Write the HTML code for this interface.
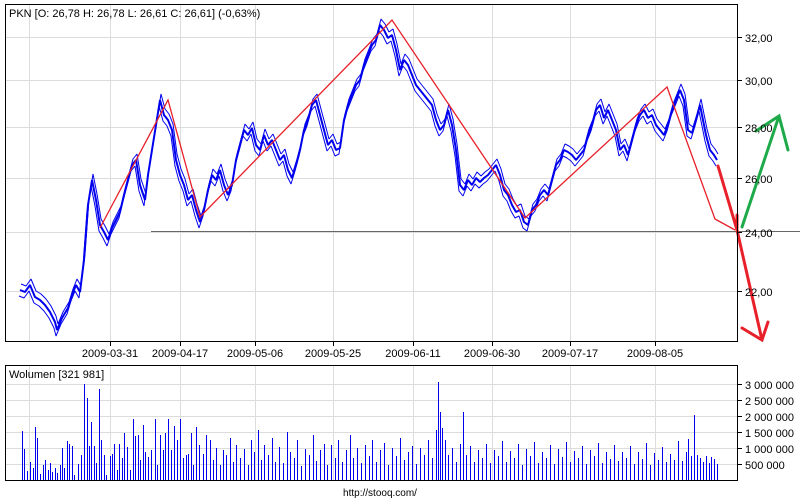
<!DOCTYPE html>
<html><head><meta charset="utf-8"><style>
html,body{margin:0;padding:0;background:#fff;width:800px;height:500px;overflow:hidden}
svg{display:block;font-family:"Liberation Sans",Arial,sans-serif}
</style></head><body>
<svg width="800" height="500" viewBox="0 0 800 500">
<defs>
<polyline id="pl" points="20,290 25,292 30,285 35,297 40,300 45,305 50,312 55,322 57,330 62,318 68,308 72,295 76,285 80,292 84,260 88,205 92,180 96,200 100,225 104,232 108,240 112,228 116,220 120,212 124,195 128,180 132,165 136,160 140,185 145,200 148,175 152,150 156,125 160,100 164,115 168,120 172,130 176,160 180,175 184,185 188,200 192,195 196,210 200,222 204,210 208,190 212,175 216,180 220,170 224,185 228,195 232,185 236,160 240,145 244,130 248,135 252,128 256,145 260,150 264,135 268,145 272,140 276,150 280,160 284,155 288,170 292,178 296,165 300,150 304,130 308,120 312,105 316,100 320,115 324,130 328,145 332,140 336,150 340,148 344,120 348,105 352,95 356,85 360,80 364,65 368,55 372,45 376,40 380,25 384,30 388,38 392,35 396,50 400,70 404,60 408,65 412,75 416,85 420,90 424,95 428,100 432,105 436,120 440,130 444,125 448,110 452,125 456,150 460,185 464,190 468,180 472,185 476,178 480,182 484,178 488,175 492,170 496,165 500,175 504,190 508,195 512,205 516,212 520,210 524,222 528,225 532,210 536,205 540,195 544,190 548,195 552,180 556,165 560,160 564,150 568,152 572,155 576,160 580,155 584,150 588,135 592,125 596,110 600,105 604,118 608,110 612,120 616,130 620,150 624,145 628,155 632,140 636,125 640,115 644,110 648,118 652,115 656,125 660,130 664,135 668,125 672,110 676,100 680,90 684,100 688,130 692,133 696,120 700,105 702,115 706,135 710,150 714,155 717,160"/>
</defs>
<g stroke="#dcdcdc" stroke-width="1" fill="none">
<path d="M29.5 5V342M110.5 5V342M180.5 5V342M255.5 5V342M333.5 5V342M413.5 5V342M492.5 5V342M570.5 5V342M655.5 5V342"/>
<path d="M5 37.5H738M5 80.5H738M5 127.5H738M5 178.5H738M5 232.5H738M5 291.5H738"/>
<path d="M29.5 366V480M110.5 366V480M180.5 366V480M255.5 366V480M333.5 366V480M413.5 366V480M492.5 366V480M570.5 366V480M655.5 366V480"/>
<path d="M5 384.5H738M5 400.5H738M5 416.5H738M5 432.5H738M5 448.5H738M5 464.5H738"/>
</g>
<path d="M151 231.5H800" stroke="#666" stroke-width="1"/>
<g stroke="#0000ee" fill="none" stroke-linejoin="bevel">
<use href="#pl" stroke-width="2"/>
<use href="#pl" stroke-width="1" transform="translate(1,-6)"/>
<use href="#pl" stroke-width="1" transform="translate(-1,6)"/>
</g>
<g stroke="#e8202a" fill="none" stroke-width="1.3">
<polyline points="100,228 168,100 200,217 392,20 525,218 667,87 715,219 735,230"/>
</g>
<g stroke="#e8202a" fill="none" stroke-width="3" stroke-linecap="round">
<path d="M718 166L737 230L762 340M742 328L762 340L768 322M737 215V228"/>
</g>
<g stroke="#1faa4a" fill="none" stroke-width="3" stroke-linecap="round">
<path d="M742 227L779 116M756 131L779 116L788 150"/>
</g>
<rect x="5.5" y="4.5" width="732" height="337" fill="none" stroke="#000"/>
<rect x="5.5" y="365.5" width="732" height="115" fill="none" stroke="#000"/>
<g stroke="#000"><path d="M110.5 342V346M180.5 342V346M255.5 342V346M333.5 342V346M413.5 342V346M492.5 342V346M570.5 342V346M655.5 342V346"/>
<path d="M738 37.5H742M738 80.5H742M738 127.5H742M738 178.5H742M738 232.5H742M738 291.5H742M738 384.5H742M738 400.5H742M738 416.5H742M738 432.5H742M738 448.5H742M738 464.5H742"/></g>
<g font-size="11" fill="#000">
<text x="9" y="17">PKN [O: 26,78  H: 26,78  L: 26,61  C: 26,61] (-0,63%)</text>
<text x="9" y="378">Wolumen [321 981]</text>
<g text-anchor="middle">
<text x="110" y="357">2009-03-31</text><text x="180" y="357">2009-04-17</text><text x="255" y="357">2009-05-06</text><text x="333" y="357">2009-05-25</text><text x="413" y="357">2009-06-11</text><text x="492" y="357">2009-06-30</text><text x="570" y="357">2009-07-17</text><text x="655" y="357">2009-08-05</text>
</g>
<text x="745" y="42">32,00</text><text x="745" y="85">30,00</text><text x="745" y="132">28,00</text><text x="745" y="183">26,00</text><text x="745" y="237">24,00</text><text x="745" y="296">22,00</text>
<text x="745" y="389">3 000 000</text><text x="745" y="405">2 500 000</text><text x="745" y="421">2 000 000</text><text x="745" y="437">1 500 000</text><text x="745" y="453">1 000 000</text><text x="745" y="469">500 000</text>
<text x="380" y="496" font-size="10" text-anchor="middle">http://stooq.com/</text>
</g>
<path transform="translate(0.5,0)" stroke="#0000ee" stroke-width="1" fill="none" d="M22 480V431M24 480V449M27 480V471M30 480V462M33 480V468M35 480V427M37 480V438M40 480V474M43 480V465M45 480V460M48 480V470M50 480V463M52 480V472M55 480V468M57 480V473M60 480V465M62 480V448M64 480V468M67 480V441M69 480V444M72 480V446M74 480V475M78 480V464M81 480V455M84 480V384M87 480V398M89 480V446M91 480V422M94 480V446M96 480V463M99 480V389M101 480V440M104 480V455M106 480V475M110 480V456M112 480V454M114 480V444M117 480V470M119 480V444M122 480V458M124 480V433M127 480V447M130 480V470M133 480V419M135 480V436M138 480V435M140 480V460M143 480V425M145 480V452M148 480V457M151 480V450M155 480V419M157 480V465M160 480V435M163 480V450M165 480V433M168 480V419M171 480V450M174 480V426M177 480V440M180 480V419M183 480V458M186 480V455M188 480V454M191 480V433M193 480V465M196 480V427M199 480V445M203 480V454M206 480V435M210 480V440M213 480V460M216 480V448M220 480V465M223 480V450M226 480V455M230 480V438M233 480V462M236 480V445M240 480V458M244 480V449M248 480V465M251 480V440M254 480V452M258 480V430M261 480V460M264 480V445M268 480V455M272 480V438M275 480V462M279 480V447M283 480V463M287 480V432M290 480V452M294 480V458M297 480V440M301 480V466M305 480V449M309 480V455M313 480V435M316 480V461M320 480V450M324 480V444M327 480V465M331 480V445M335 480V458M338 480V440M342 480V462M346 480V450M350 480V435M353 480V458M357 480V448M361 480V463M365 480V445M369 480V456M372 480V440M376 480V462M380 480V450M384 480V443M388 480V465M392 480V448M396 480V456M400 480V438M404 480V460M408 480V452M412 480V446M416 480V464M420 480V448M424 480V455M428 480V440M432 480V458M436 480V430M438 480V382M440 480V412M442 480V428M445 480V440M448 480V455M452 480V448M456 480V462M460 480V444M463 480V412M466 480V455M470 480V446M474 480V462M478 480V450M482 480V458M486 480V444M490 480V463M494 480V450M498 480V456M502 480V441M506 480V462M510 480V451M514 480V458M518 480V444M522 480V465M526 480V449M530 480V456M534 480V442M538 480V463M542 480V452M546 480V458M550 480V445M554 480V464M558 480V449M562 480V457M566 480V442M570 480V462M574 480V451M578 480V458M582 480V446M586 480V464M590 480V450M594 480V456M598 480V443M602 480V463M606 480V452M610 480V459M614 480V445M618 480V461M622 480V452M626 480V458M630 480V446M634 480V464M638 480V452M642 480V459M646 480V443M650 480V465M654 480V453M658 480V460M662 480V447M666 480V462M670 480V454M674 480V460M678 480V441M682 480V461M686 480V452M688 480V439M691 480V456M694 480V415M697 480V455M700 480V458M703 480V462M706 480V456M709 480V463M711 480V457M714 480V459M717 480V464"/>
</svg>
</body></html>
